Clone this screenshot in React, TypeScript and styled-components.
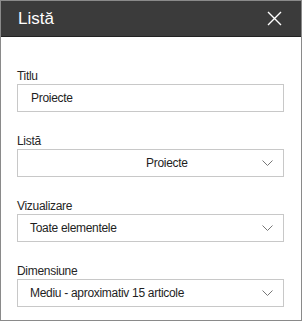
import styled, { createGlobalStyle } from "styled-components";

const GlobalStyle = createGlobalStyle`
  html, body {
    margin: 0;
    padding: 0;
    background: #ffffff;
  }
  body {
    font-family: "Liberation Sans", Arial, sans-serif;
  }
`;

const fields = [
  { label: "Titlu", value: "Proiecte", kind: "text", indent: 13 },
  { label: "Listă", value: "Proiecte", kind: "select", indent: 128 },
  { label: "Vizualizare", value: "Toate elementele", kind: "select", indent: 12 },
  { label: "Dimensiune", value: "Mediu - aproximativ 15 articole", kind: "select", indent: 12 },
];

const Chevron = () => (
  <svg width="11" height="6" viewBox="0 0 11 6" fill="none">
    <path d="M0.5 0.5 L5.5 5.5 L10.5 0.5" stroke="#767676" strokeWidth="1" />
  </svg>
);

const CloseIcon = () => (
  <svg width="15" height="15" viewBox="0 0 15 15" fill="none">
    <path d="M1 1 L14 14 M14 1 L1 14" stroke="#ffffff" strokeWidth="1.4" />
  </svg>
);

const App = () => {
  return (
    <>
      <GlobalStyle />
      <Panel>
        <Header>
          <Title>Listă</Title>
          <CloseButton>
            <CloseIcon />
          </CloseButton>
        </Header>
        <Body>
          {fields.map((f) => (
            <Field key={f.label}>
              <Label>{f.label}</Label>
              <Box>
                <Value $indent={f.indent}>{f.value}</Value>
                {f.kind === "select" && (
                  <ChevronWrap>
                    <Chevron />
                  </ChevronWrap>
                )}
              </Box>
            </Field>
          ))}
        </Body>
      </Panel>
    </>
  );
};

export default App;

const Panel = styled.div`
  width: 302px;
  height: 321px;
  box-sizing: border-box;
  border: 1px solid #8a8a8a;
  background: #ffffff;
  display: flex;
  flex-direction: column;
`;

const Header = styled.div`
  height: 36px;
  box-sizing: border-box;
  background: #3b3b3b;
  border-bottom: 1px solid #222222;
  display: flex;
  align-items: center;
  justify-content: space-between;
  padding: 0 19px 0 17px;
`;

const Title = styled.div`
  color: #ffffff;
  font-size: 17px;
  line-height: 20px;
  margin-top: 1px;
`;

const CloseButton = styled.div`
  display: flex;
  align-items: center;
  margin-top: -1px;
`;

const Body = styled.div`
  display: flex;
  flex-direction: column;
  gap: 21px;
  padding: 31px 17px 0 16px;
`;

const Field = styled.div`
  display: flex;
  flex-direction: column;
`;

const Label = styled.div`
  color: #262626;
  font-size: 12px;
  line-height: 16px;
  letter-spacing: -0.3px;
`;

const Box = styled.div`
  height: 28px;
  box-sizing: border-box;
  border: 1px solid #c8c8c8;
  display: flex;
  align-items: center;
  justify-content: space-between;
`;

const Value = styled.div<{ $indent: number }>`
  color: #1e1e1e;
  font-size: 12px;
  letter-spacing: -0.3px;
  padding-left: ${({ $indent }) => $indent}px;
  white-space: nowrap;
`;

const ChevronWrap = styled.div`
  display: flex;
  align-items: center;
  padding-right: 10px;
`;
